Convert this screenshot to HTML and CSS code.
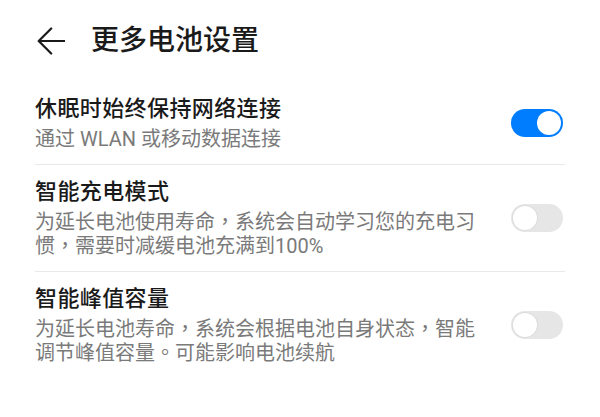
FILE: index.html
```html
<!DOCTYPE html>
<html lang="zh-CN">
<head>
<meta charset="utf-8">
<title>更多电池设置</title>
<link rel="stylesheet" href="styles.css">
</head>
<body>
<div class="page">
  <header class="header">
    <svg class="back" width="28" height="28" viewBox="0 0 28 28" aria-hidden="true">
      <path d="M27.5 14H2.2M14.2 1.5L1.7 14l12.5 12.5" fill="none" stroke="#1a1a1a" stroke-width="2.2" stroke-linecap="round" stroke-linejoin="round"/>
    </svg>
    <h1 class="title">更多电池设置</h1>
  </header>
  <div class="list">
    <div class="row">
      <div class="text">
        <div class="row-title">休眠时始终保持网络连接</div>
        <div class="row-sub">通过 WLAN 或移动数据连接</div>
      </div>
      <div class="switch on"><span class="knob"></span></div>
    </div>
    <div class="row">
      <div class="text">
        <div class="row-title">智能充电模式</div>
        <div class="row-sub centered-punct" lang="zh-TW">为延长电池使用寿命，系统会自动学习您的充电习惯，需要时减缓电池充满到100%</div>
      </div>
      <div class="switch"><span class="knob"></span></div>
    </div>
    <div class="row last">
      <div class="text">
        <div class="row-title">智能峰值容量</div>
        <div class="row-sub centered-punct" lang="zh-TW">为延长电池寿命，系统会根据电池自身状态，智能调节峰值容量。可能影响电池续航</div>
      </div>
      <div class="switch"><span class="knob"></span></div>
    </div>
  </div>
</div>
</body>
</html>
```

FILE: styles.css
```css
html, body {
  margin: 0;
  padding: 0;
  background: #ffffff;
}

body {
  font-family: Roboto, "Noto Sans CJK SC", sans-serif;
  color: #1a1a1a;
}

.page {
  width: 600px;
  height: 417px;
  overflow: hidden;
}

.header {
  display: flex;
  align-items: center;
  height: 82px;
  padding-left: 37px;
  box-sizing: border-box;
}

.back {
  display: block;
  flex: none;
}

.title {
  margin: 0 0 0 26px;
  font-size: 28px;
  line-height: 40px;
  font-weight: 500;
  color: #1a1a1a;
}

.list {
  margin: 0 35px;
}

.row {
  display: flex;
  align-items: center;
  gap: 28px;
  padding: 12px 0 13px;
  border-bottom: 1px solid #e8e8e8;
}

.row.last {
  border-bottom: none;
}

.text {
  flex: 1;
  display: flex;
  flex-direction: column;
  gap: 3px;
  min-width: 0;
}

.row-title {
  font-size: 22px;
  line-height: 30px;
  font-weight: 500;
  color: #1a1a1a;
  letter-spacing: 0.4px;
}

.row-sub {
  font-size: 20px;
  line-height: 24px;
  color: #7a7a7a;
}

.row-sub.centered-punct {
  font-family: Roboto, "Noto Sans CJK TC", "Noto Sans CJK SC", sans-serif;
}

.switch {
  position: relative;
  flex: none;
  width: 52px;
  height: 28px;
  border-radius: 14px;
  background: #e6e6e6;
  margin-right: 2px;
}

.switch .knob {
  position: absolute;
  top: 2px;
  left: 2px;
  width: 24px;
  height: 24px;
  border-radius: 50%;
  background: #ffffff;
  box-shadow: 0 0 0 1px #dcdcdc;
}

.switch.on {
  background: #007dff;
}

.switch.on .knob {
  left: 26px;
  box-shadow: none;
}
```
